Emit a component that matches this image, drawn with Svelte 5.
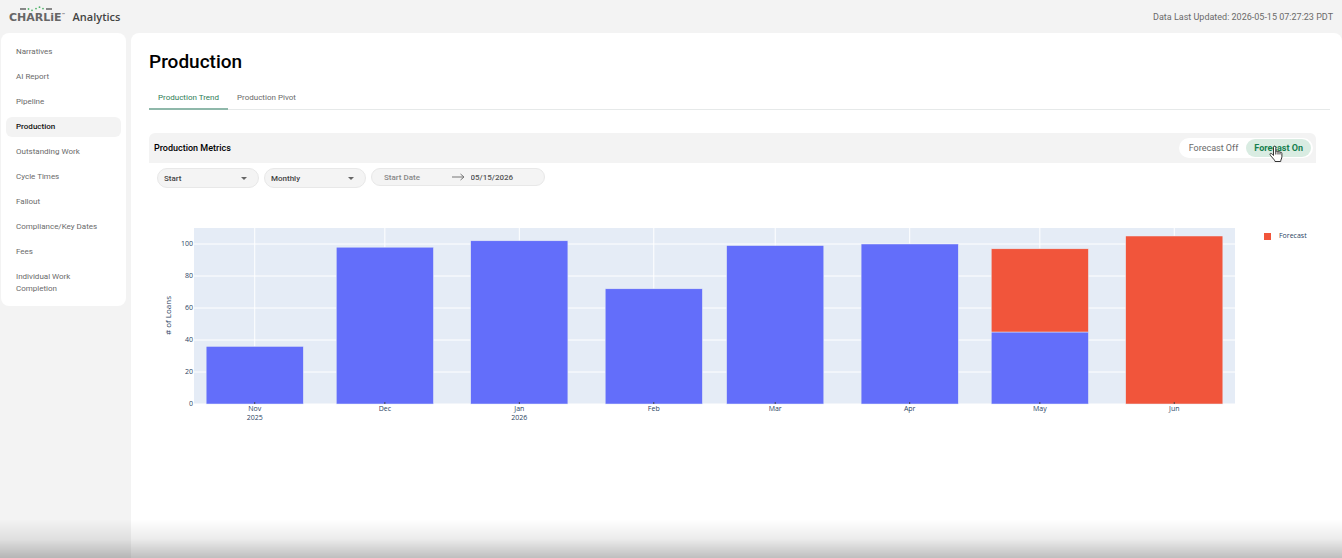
<script>
  const pages = [
    'Narratives',
    'AI Report',
    'Pipeline',
    'Production',
    'Outstanding Work',
    'Cycle Times',
    'Fallout',
    'Compliance/Key Dates',
    'Fees',
    'Individual Work Completion'
  ];
  const tabs = ['Production Trend', 'Production Pivot'];

  let page = $state('Production');
  let tab = $state('Production Trend');
  let forecast = $state('on');
  let dateType = $state('Start');
  let period = $state('Monthly');
  let startDate = $state('');
  let endDate = $state('05/15/2026');

  // day = days since the left edge of the time axis
  const months = [
    { label: 'Nov', year: '2025', day: 14, loans: 36, forecast: 0 },
    { label: 'Dec', day: 44, loans: 98, forecast: 0 },
    { label: 'Jan', year: '2026', day: 75, loans: 102, forecast: 0 },
    { label: 'Feb', day: 106, loans: 72, forecast: 0 },
    { label: 'Mar', day: 134, loans: 99, forecast: 0 },
    { label: 'Apr', day: 165, loans: 100, forecast: 0 },
    { label: 'May', day: 195, loans: 45, forecast: 52 },
    { label: 'Jun', day: 226, loans: 0, forecast: 105 }
  ];
  const ticks = [0, 20, 40, 60, 80, 100];
  const totalDays = 240;
  const barDays = 22.4;
  const plotHeight = 176;

  const x = (day) => `${(day / totalDays) * 100}%`;
  const y = (value) => plotHeight - value * 1.6;
</script>

<header class="topbar">
  <div class="brand">
    <div class="logo">
      <svg width="34" height="6" viewBox="0 0 34 6" aria-hidden="true">
        <path d="M1 3h6M27 3h6" stroke="#666" stroke-width="1.4" />
        <g fill="#4fb36a">
          <circle cx="9.500" cy="3" r="0.9" />
          <circle cx="13" cy="4.300" r="0.9" />
          <circle cx="17" cy="2.600" r="0.9" />
          <circle cx="20.500" cy="1.200" r="0.9" />
          <circle cx="24" cy="2.600" r="0.9" />
        </g>
      </svg>
      <span class="wordmark">CHARLiE<sup>™</sup></span>
    </div>
    <span class="product">Analytics</span>
  </div>
  <span class="updated">Data Last Updated: 2026-05-15 07:27:23 PDT</span>
</header>

<div class="layout">
  <nav class="sidebar">
    {#each pages as name}
      <a href="#top" class:active={page === name} onclick={() => (page = name)}>{name}</a>
    {/each}
  </nav>

  <main>
    <h1>Production</h1>

    <div class="tabs" role="tablist">
      {#each tabs as name}
        <button
          type="button"
          role="tab"
          aria-selected={tab === name}
          class:active={tab === name}
          onclick={() => (tab = name)}>{name}</button>
      {/each}
    </div>

    <section class="panel">
      <div class="panel-head">
        <h2>Production Metrics</h2>
        <div class="toggle">
          <label class:on={forecast === 'off'}>
            <input type="radio" name="forecast" value="off" bind:group={forecast} />
            Forecast Off
          </label>
          <label class:on={forecast === 'on'}>
            <input type="radio" name="forecast" value="on" bind:group={forecast} />
            Forecast On
          </label>
          <svg class="pointer" width="14" height="18" viewBox="0 0 14 18" aria-hidden="true">
            <path
              d="M4.500 10.500V2.400c0-1.700 2.300-1.700 2.300 0v4.300c.3-1 2-.9 2.200.3.500-.8 1.900-.6 2 .5.700-.7 1.900-.3 1.900.9v3.400c0 1.700-1.200 2.600-1.200 4.700H6c-.3-1.700-2.100-3-3.300-4.600C1.800 10.700.7 9.700 1 8.900c.4-1 1.700-.7 3.500 1.600z"
              fill="#fff" stroke="#333" stroke-width="1" stroke-linejoin="round" />
            <path d="M6.800 6.500v3M9 7v2.500M11 7.500v2" stroke="#333" fill="none" />
          </svg>
        </div>
      </div>

      <div class="filters">
        <div class="select">
          <select aria-label="Date type" bind:value={dateType}>
            <option>Start</option>
            <option>Close</option>
          </select>
          <svg width="6" height="3" viewBox="0 0 6 3" aria-hidden="true"><path d="M0 0h6L3 3z" fill="#666" /></svg>
        </div>
        <div class="select">
          <select aria-label="Period" bind:value={period}>
            <option>Monthly</option>
            <option>Weekly</option>
          </select>
          <svg width="6" height="3" viewBox="0 0 6 3" aria-hidden="true"><path d="M0 0h6L3 3z" fill="#666" /></svg>
        </div>
        <div class="range">
          <input type="text" aria-label="Start date" placeholder="Start Date" bind:value={startDate} />
          <svg width="13" height="8" viewBox="0 0 13 8" aria-hidden="true">
            <path d="M0 4h12M8.500 1l3.500 3-3.500 3" fill="none" stroke="#777" />
          </svg>
          <input type="text" aria-label="End date" bind:value={endDate} />
        </div>
      </div>

      <div class="chart">
        <div class="y-title"># of Loans</div>
        <svg class="plot" width="100%" height="200" role="img" aria-label="Loans per month">
          <rect width="100%" height={plotHeight} fill="#e5ecf6" />
          {#each ticks as tick}
            <line x1="0" x2="100%" y1={y(tick)} y2={y(tick)} class="grid" />
            <text x="-1" y={y(tick) + 2} text-anchor="end">{tick}</text>
          {/each}
          {#each months as m}
            {@const actual = m.loans}
            {@const extra = forecast === 'on' ? m.forecast : 0}
            <line x1={x(m.day)} x2={x(m.day)} y1="0" y2={plotHeight} class="grid" />
            {#if actual}
              <rect x={x(m.day - barDays / 2)} y={y(actual)} width={x(barDays)} height={actual * 1.6} class="bar actual" />
            {/if}
            {#if extra}
              <rect x={x(m.day - barDays / 2)} y={y(actual + extra)} width={x(barDays)} height={extra * 1.6} class="bar forecast" />
            {/if}
            <line x1={x(m.day)} x2={x(m.day)} y1={plotHeight - 2} y2={plotHeight} class="tick" />
            <text x={x(m.day)} y="183" text-anchor="middle">{m.label}</text>
            {#if m.year}
              <text x={x(m.day)} y="192" text-anchor="middle">{m.year}</text>
            {/if}
          {/each}
        </svg>
        <div class="legend"><span class="swatch"></span>Forecast</div>
      </div>
    </section>
  </main>
</div>
<div class="shade"></div>

<style>
  :global(body) {
    margin: 0;
    background: #f3f3f3;
    font-family: Roboto, sans-serif;
    font-size: 8px;
    color: #6a6a6a;
  }

  :global(#app) {
    min-height: 100vh;
    display: flex;
    flex-direction: column;
  }

  .topbar {
    display: flex;
    justify-content: space-between;
    align-items: center;
    height: 33px;
    padding: 0 9px;
    box-sizing: border-box;
  }

  .brand {
    display: flex;
    align-items: center;
    gap: 7px;
  }

  .logo {
    display: flex;
    flex-direction: column;
    align-items: flex-start;
    padding-bottom: 5px;
  }

  .logo svg {
    margin-left: 10px;
  }

  .wordmark {
    font-family: "DejaVu Sans", sans-serif;
    font-size: 11px;
    font-weight: 700;
    line-height: 11px;
    color: #666;
  }

  .wordmark sup {
    font-size: 4px;
    line-height: 4px;
  }

  .product {
    font-family: "Open Sans", sans-serif;
    font-size: 11px;
    font-weight: 600;
    line-height: 14px;
    color: #444;
  }

  .updated {
    font-size: 9px;
  }

  .layout {
    flex: 1;
    display: flex;
    align-items: flex-start;
    gap: 5px;
    padding-left: 1px;
  }

  .sidebar {
    width: 125px;
    box-sizing: border-box;
    display: flex;
    flex-direction: column;
    flex-shrink: 0;
    gap: 5px;
    padding: 9px 5px 7px;
    border-radius: 8px;
    background: #fff;
  }

  .sidebar a {
    padding: 4px 30px 4px 10px;
    border-radius: 6px;
    line-height: 12px;
    color: #6a6a6a;
    text-decoration: none;
  }

  .sidebar a:nth-child(8) {
    padding-right: 0;
  }

  .sidebar a.active {
    background: #f3f3f3;
    color: #111;
    font-weight: 500;
  }

  main {
    flex: 1;
    align-self: stretch;
    min-width: 0;
    min-height: calc(100vh - 33px);
    box-sizing: border-box;
    padding: 17px 12px 0 18px;
    border-radius: 8px 8px 0 0;
    background: #fff;
  }

  h1 {
    margin: 0;
    font-size: 19px;
    line-height: 24px;
    font-weight: 500;
    color: #000;
  }

  .tabs {
    display: flex;
    margin-top: 12px;
    border-bottom: 1px solid #e6e9e9;
  }

  .tabs button {
    height: 24px;
    margin-bottom: -1px;
    padding: 0 9px;
    border: none;
    border-bottom: 2px solid transparent;
    background: none;
    font: inherit;
    color: #6a6a6a;
  }

  .tabs button.active {
    border-bottom-color: #8fb8aa;
    color: #2f7d57;
  }

  .panel {
    margin: 23px 14px 0 0;
  }

  .panel-head {
    display: flex;
    justify-content: space-between;
    align-items: center;
    height: 30px;
    padding: 0 3px 0 5px;
    border-radius: 6px 6px 0 0;
    background: #f3f3f3;
  }

  h2 {
    margin: 0;
    font-size: 9px;
    font-weight: 500;
    color: #000;
  }

  .toggle {
    position: relative;
    display: flex;
    padding: 1px 2px;
    border-radius: 10px;
    background: #fff;
    font-size: 9px;
  }

  .toggle label {
    padding: 0 8px;
    border-radius: 9px;
    line-height: 18px;
  }

  .toggle label.on {
    background: #d9ece2;
    color: #16804f;
    font-weight: 700;
  }

  .toggle input {
    position: absolute;
    opacity: 0;
    pointer-events: none;
  }

  .pointer {
    position: absolute;
    right: 30px;
    top: 7px;
  }

  .filters {
    display: flex;
    align-items: flex-start;
    gap: 5px;
    padding: 5px 8px;
  }

  .select {
    display: grid;
    align-items: center;
    width: 102px;
  }

  .select select,
  .select svg {
    grid-area: 1 / 1;
  }

  .select svg {
    justify-self: end;
    margin-right: 12px;
    pointer-events: none;
  }

  select {
    appearance: none;
    width: 100%;
    height: 20px;
    padding: 1px 6px 0;
    border: 1px solid #e8e8e8;
    border-radius: 10px;
    background: #f4f4f4;
    font: inherit;
    font-weight: 500;
    color: #444;
  }

  .range {
    display: flex;
    align-items: center;
    width: 174px;
    height: 18px;
    box-sizing: border-box;
    padding: 0 12px;
    border: 1px solid #e8e8e8;
    border-radius: 9px;
    background: #f4f4f4;
  }

  .range svg {
    flex-shrink: 0;
    margin: 0 6px;
  }

  .range input {
    flex: 1;
    min-width: 0;
    padding: 1px 0 0;
    border: none;
    background: none;
    font: inherit;
    font-weight: 500;
    color: #555;
  }

  .range input::placeholder {
    color: #888;
  }

  .chart {
    display: flex;
    align-items: flex-start;
    margin-top: 35px;
    font-family: "Open Sans", sans-serif;
    color: #2a3f5f;
  }

  .y-title {
    width: 10px;
    height: 176px;
    margin: 0 21px 0 14px;
    line-height: 10px;
    text-align: center;
    writing-mode: vertical-rl;
    transform: rotate(180deg);
  }

  .plot {
    flex: 1;
    min-width: 0;
    overflow: visible;
  }

  .plot text {
    font-size: 7px;
    fill: #2a3f5f;
  }

  .grid {
    stroke: #fff;
    stroke-width: 1;
  }

  .tick {
    stroke: #444;
    stroke-width: 1;
  }

  .bar {
    stroke: #e5ecf6;
    stroke-width: 0.5;
  }

  .actual {
    fill: #636efa;
  }

  .forecast {
    fill: #f1553b;
  }

  .legend {
    display: flex;
    align-items: center;
    gap: 8px;
    width: 52px;
    margin: 3px 0 0 29px;
    font-size: 7px;
    line-height: 10px;
  }

  .swatch {
    width: 7px;
    height: 7px;
    background: #f1553b;
  }

  .shade {
    position: fixed;
    left: 0;
    right: 0;
    bottom: 0;
    height: 38px;
    background: linear-gradient(rgba(0, 0, 0, 0), rgba(0, 0, 0, 0.08) 50%, rgba(0, 0, 0, 0.25));
    pointer-events: none;
  }
</style>
